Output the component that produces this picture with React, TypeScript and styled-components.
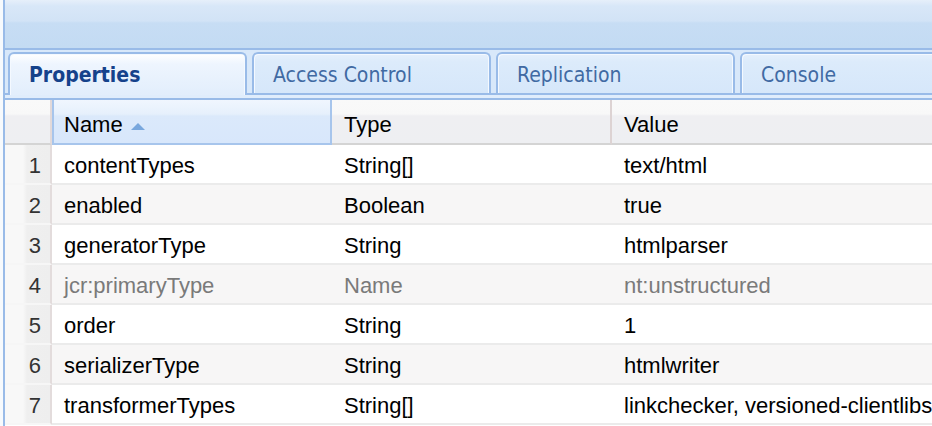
import React from "react";
import styled, { createGlobalStyle, css } from "styled-components";

const Global = createGlobalStyle`
  html, body { margin: 0; padding: 0; background: #ffffff; overflow: hidden; }
  body { width: 932px; height: 426px; }
`;

const Frame = styled.div`
  width: 1200px;
  height: 426px;
  padding-left: 3px;
  background: #f7fafd;
`;

const Panel = styled.div`
  border-left: 2px solid #99bbe8;
  height: 100%;
  background: #ffffff;
  display: flex;
  flex-direction: column;
`;

const TopBar = styled.div`
  height: 48px;
  border-bottom: 2px solid #99bbe8;
  background: linear-gradient(
    to bottom,
    #e6effa 0px,
    #d8e7f8 6px,
    #d2e3f6 21px,
    #c7ddf4 23px,
    #c3dbf3 48px
  );
`;

const TabStrip = styled.div`
  background: #d8e8fa;
  padding-top: 2px;
`;

const TabRow = styled.div`
  display: flex;
  align-items: flex-end;
  gap: 5px;
  padding-left: 3px;
  border-bottom: 2px solid #99bbe8;
  height: 41px;
`;

const Tab = styled.div<{ $active?: boolean }>`
  position: relative;
  box-sizing: border-box;
  flex: 0 0 239px;
  height: 41px;
  padding: 2px 0 0 19px;
  display: flex;
  align-items: center;
  border: 2px solid #99bbe8;
  border-bottom: none;
  border-radius: 6px 6px 0 0;
  box-shadow: inset 1px 1px 0 #f4f9ff, inset -1px 0 0 #f4f9ff;
  font-family: "DejaVu Sans Condensed", "DejaVu Sans", Tahoma, sans-serif;
  font-size: 21px;
  color: #416aa3;
  background: linear-gradient(to bottom, #e6f0fc 0px, #dcebfb 8px, #d6e7fa 100%);
  ${(p) =>
    p.$active &&
    css`
      height: 43px;
      margin-bottom: -2px;
      z-index: 1;
      padding-left: 19px;
      padding-bottom: 2px;
      font-weight: bold;
      color: #15428b;
      background: linear-gradient(to bottom, #ffffff 0px, #eef5fe 10px, #e2eefc 100%);
    `}
`;

const StripFoot = styled.div`
  height: 3px;
  background: #e0edfc;
  border-bottom: 2px solid #99bbe8;
`;

const Grid = styled.div`
  display: grid;
  grid-template-columns: 47px 280px 280px 1fr;
  font-family: "Liberation Sans", Arial, Helvetica, sans-serif;
  font-size: 22px;
  color: #000000;
`;

const HeadCell = styled.div<{ $active?: boolean; $num?: boolean }>`
  box-sizing: border-box;
  height: 45px;
  padding: 7px 0 0 12px;
  display: flex;
  align-items: center;
  gap: 8px;
  border-bottom: 2px solid #d4d4d4;
  border-right: 2px solid #ddd3d3;
  background: linear-gradient(to bottom, #f9f9f9 0px, #f8f8f8 14px, #efeff2 16px, #eeeff2 100%);
  ${(p) =>
    p.$num &&
    css`
      padding: 0;
      border-right-color: #e2d9d9;
    `}
  ${(p) =>
    p.$active &&
    css`
      border-left: 2px solid #a7c5ec;
      border-right: 2px solid #a7c5ec;
      border-bottom-color: #a7c5ec;
      padding-left: 10px;
      background: linear-gradient(to bottom, #f0f6fe 0px, #e6f0fc 14px, #dbe9fb 16px, #d8e7fb 100%);
    `}
`;

const SortArrow = styled.svg`
  width: 14px;
  height: 8px;
  margin-top: 2px;
`;

const Cell = styled.div<{ $alt?: boolean; $muted?: boolean }>`
  box-sizing: border-box;
  height: 40px;
  padding: 3px 0 0 12px;
  display: flex;
  align-items: center;
  border-bottom: 2px solid #ebebeb;
  white-space: nowrap;
  background: ${(p) => (p.$alt ? "#f7f6f6" : "#ffffff")};
  color: ${(p) => (p.$muted ? "#7a7a7a" : "#000000")};
`;

const NumCell = styled.div`
  box-sizing: border-box;
  height: 40px;
  padding: 3px 9px 0 0;
  display: flex;
  align-items: center;
  justify-content: flex-end;
  border-bottom: 2px solid #f6f6f6;
  border-right: 2px solid #e3dcdc;
  color: #333333;
  background: linear-gradient(to right, #f8f8f8 0px, #f8f8f8 18px, #efefef 22px, #eeeeee 100%);
`;

const rows: { name: string; type: string; value: string; muted?: boolean }[] = [
  { name: "contentTypes", type: "String[]", value: "text/html" },
  { name: "enabled", type: "Boolean", value: "true" },
  { name: "generatorType", type: "String", value: "htmlparser" },
  { name: "jcr:primaryType", type: "Name", value: "nt:unstructured", muted: true },
  { name: "order", type: "String", value: "1" },
  { name: "serializerType", type: "String", value: "htmlwriter" },
  { name: "transformerTypes", type: "String[]", value: "linkchecker, versioned-clientlibs" },
];

export default function App() {
  return (
    <>
      <Global />
      <Frame>
        <Panel>
          <TopBar />
          <TabStrip>
            <TabRow>
              <Tab $active>Properties</Tab>
              <Tab>Access Control</Tab>
              <Tab>Replication</Tab>
              <Tab>Console</Tab>
            </TabRow>
            <StripFoot />
          </TabStrip>
          <Grid>
            <HeadCell $num />
            <HeadCell $active>
              Name
              <SortArrow viewBox="0 0 14 8">
                <polygon points="0,8 7,1 14,8" fill="#79a7dd" />
              </SortArrow>
            </HeadCell>
            <HeadCell>Type</HeadCell>
            <HeadCell>Value</HeadCell>
            {rows.map((r, i) => {
              const alt = i % 2 === 1;
              return (
                <React.Fragment key={r.name}>
                  <NumCell>{i + 1}</NumCell>
                  <Cell $alt={alt} $muted={r.muted}>{r.name}</Cell>
                  <Cell $alt={alt} $muted={r.muted}>{r.type}</Cell>
                  <Cell $alt={alt} $muted={r.muted}>{r.value}</Cell>
                </React.Fragment>
              );
            })}
          </Grid>
        </Panel>
      </Frame>
    </>
  );
}
